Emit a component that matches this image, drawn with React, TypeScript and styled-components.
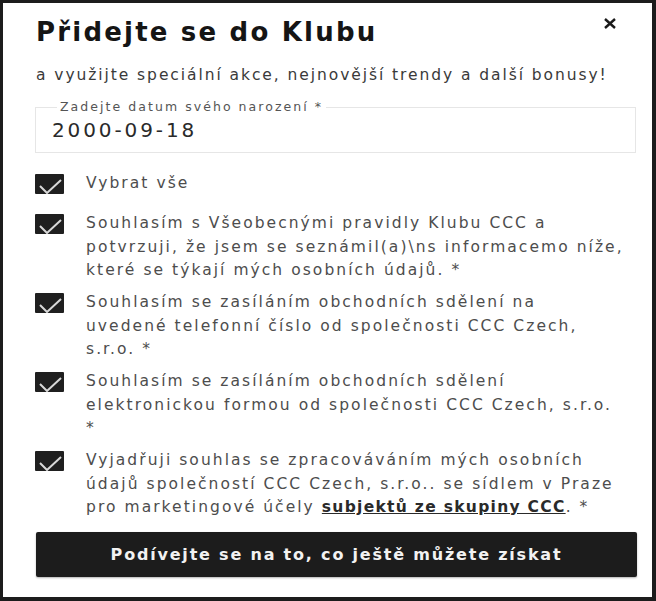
import React from 'react'
import styled, { createGlobalStyle } from 'styled-components'

const GlobalStyle = createGlobalStyle`
  html, body {
    margin: 0;
    padding: 0;
    background: #fff;
  }
  body {
    font-family: 'DejaVu Sans', 'Liberation Sans', sans-serif;
  }
`

const Frame = styled.div`
  width: 656px;
  height: 601px;
  box-sizing: border-box;
  border: 3px solid #1c1c1c;
  border-right-width: 4px;
  border-bottom-width: 4px;
  background: #fff;
  padding: 9px 16px 0 32px;
  display: flex;
  flex-direction: column;
`

const Header = styled.div`
  display: flex;
  justify-content: space-between;
  align-items: flex-start;
`

const Title = styled.h1`
  margin: 0 0 0 1px;
  font-size: 26px;
  font-weight: 700;
  color: #151515;
  letter-spacing: 2.2px;
  line-height: 40px;
  white-space: nowrap;
`

const Close = styled.button`
  border: none;
  background: none;
  padding: 0;
  margin: 5px 18px 0 0;
  width: 16px;
  height: 12px;
  cursor: pointer;
`

const Subtitle = styled.p`
  margin: 12px 0 0 1px;
  font-size: 15.5px;
  color: #3a3a3a;
  letter-spacing: 1.93px;
  line-height: 22px;
  white-space: nowrap;
`

const Field = styled.fieldset`
  margin: 14px 0 0;
  padding: 0 16px 0;
  border: 1px solid #e6e6e6;
  height: 53px;
  box-sizing: border-box;
`

const Legend = styled.legend`
  padding: 0 3px;
  margin-left: 5px;
  font-size: 12.5px;
  line-height: 14px;
  letter-spacing: 2.05px;
  color: #555;
`

const Value = styled.div`
  font-size: 20px;
  color: #2a2a2a;
  letter-spacing: 2.9px;
  line-height: 26px;
  padding-top: 3px;
`

const List = styled.div`
  display: flex;
  flex-direction: column;
  gap: 8.5px;
  margin-top: 19px;
`

const Row = styled.label<{ $first?: boolean }>`
  display: flex;
  align-items: flex-start;
  gap: 22px;
  margin-bottom: ${p => (p.$first ? '8px' : '0')};
`

const Box = styled.span`
  flex: 0 0 29px;
  width: 29px;
  height: 20px;
  margin-top: 2px;
  background: #1f1f1f;
  border-radius: 1px;
  display: flex;
  align-items: flex-end;
  justify-content: center;
`

const Text = styled.span`
  font-size: 15.5px;
  line-height: 23.5px;
  color: #4d4d4d;
  letter-spacing: 2.05px;
  white-space: nowrap;
`

const Link = styled.a`
  color: #2a2a2a;
  font-weight: 700;
  letter-spacing: 1.3px;
  text-decoration: underline;
`

const Button = styled.button`
  margin-top: 12px;
  height: 45px;
  width: 601px;
  margin-left: 1px;
  border: none;
  border-radius: 2px;
  background: #1c1c1c;
  color: #f2f2f2;
  font-family: 'DejaVu Sans', 'Liberation Sans', sans-serif;
  font-size: 16px;
  font-weight: 700;
  letter-spacing: 1.8px;
  box-shadow: 0 1px 2px rgba(0, 0, 0, 0.3);
`

const Check = () => (
  <svg width="26" height="17" viewBox="0 0 26 17">
    <path d="M3 9 L10 16 L24 3" fill="none" stroke="#d8d8d8" strokeWidth="2" />
  </svg>
)

const items: React.ReactNode[] = [
  <>
    Souhlasím s Všeobecnými pravidly Klubu CCC a<br />
    potvrzuji, že jsem se seznámil(a)\ns informacemo níže,<br />
    které se týkají mých osobních údajů. *
  </>,
  <>
    Souhlasím se zasíláním obchodních sdělení na<br />
    uvedené telefonní číslo od společnosti CCC Czech,<br />
    s.r.o. *
  </>,
  <>
    Souhlasím se zasíláním obchodních sdělení<br />
    elektronickou formou od společnosti CCC Czech, s.r.o.<br />
    *
  </>,
  <>
    Vyjadřuji souhlas se zpracováváním mých osobních<br />
    údajů společností CCC Czech, s.r.o.. se sídlem v Praze<br />
    pro marketingové účely <Link>subjektů ze skupiny CCC</Link>. *
  </>,
]

export default function App() {
  return (
    <>
      <GlobalStyle />
      <Frame>
        <Header>
          <Title>Přidejte se do Klubu</Title>
          <Close aria-label="Zavřít">
            <svg width="14" height="11" viewBox="0 0 14 11">
              <path d="M2 1 L12 10 M12 1 L2 10" stroke="#1a1a1a" strokeWidth="2.4" />
            </svg>
          </Close>
        </Header>
        <Subtitle>a využijte speciální akce, nejnovější trendy a další bonusy!</Subtitle>
        <Field>
          <Legend>Zadejte datum svého narození *</Legend>
          <Value>2000-09-18</Value>
        </Field>
        <List>
          <Row $first>
            <Box><Check /></Box>
            <Text>Vybrat vše</Text>
          </Row>
          {items.map((t, i) => (
            <Row key={i}>
              <Box><Check /></Box>
              <Text>{t}</Text>
            </Row>
          ))}
        </List>
        <Button>Podívejte se na to, co ještě můžete získat</Button>
      </Frame>
    </>
  )
}
